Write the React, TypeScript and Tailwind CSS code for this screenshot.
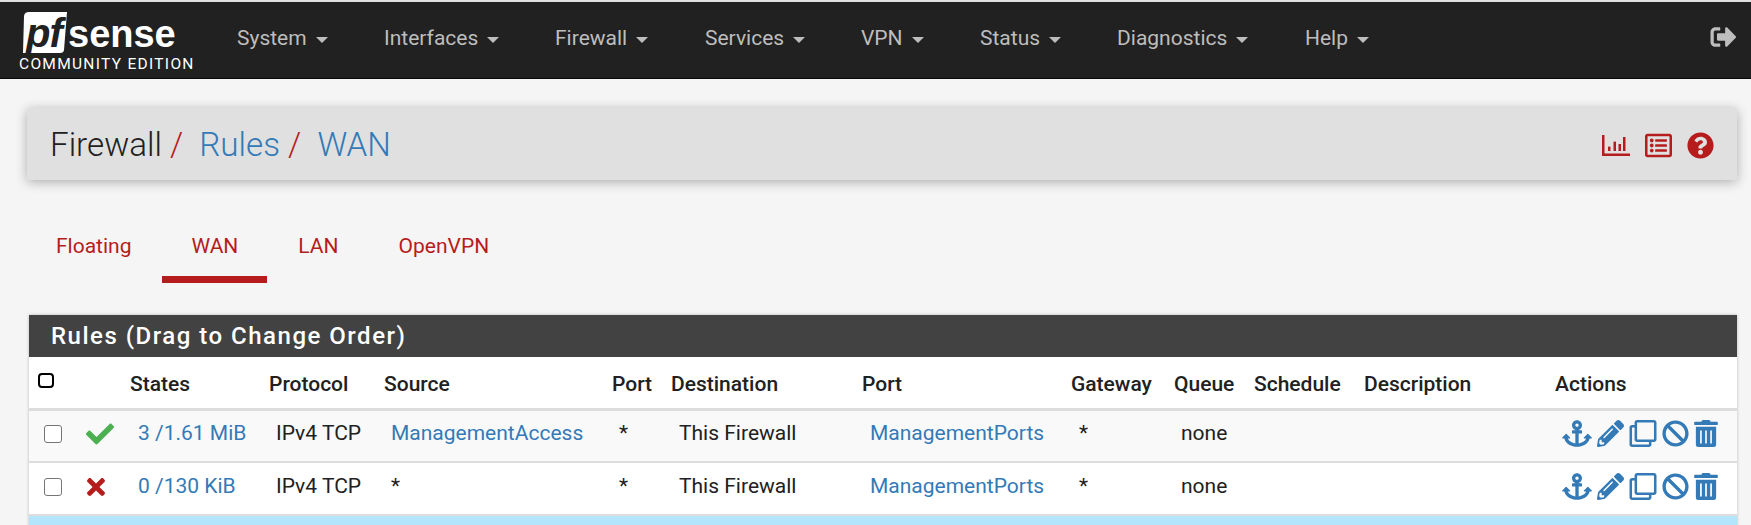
import React from 'react';
import {
  FaAnchor,
  FaBan,
  FaCheck,
  FaPencilAlt,
  FaQuestionCircle,
  FaRegClone,
  FaRegListAlt,
  FaSignOutAlt,
  FaTimes,
  FaTrashAlt,
} from 'react-icons/fa';

const menu = [
  { label: 'System', cls: 'w-[147px]' },
  { label: 'Interfaces', cls: 'w-[171px]' },
  { label: 'Firewall', cls: 'w-[150px]' },
  { label: 'Services', cls: 'w-[156px]' },
  { label: 'VPN', cls: 'w-[119px]' },
  { label: 'Status', cls: 'w-[137px]' },
  { label: 'Diagnostics', cls: 'w-[188px]' },
  { label: 'Help', cls: 'w-[90px]' },
];

const tabs = [
  { label: 'Floating', active: false },
  { label: 'WAN', active: true },
  { label: 'LAN', active: false },
  { label: 'OpenVPN', active: false },
];

const headers = [
  { label: '', cls: 'w-[45px]' },
  { label: '', cls: 'w-[56px]' },
  { label: 'States', cls: 'w-[139px]' },
  { label: 'Protocol', cls: 'w-[115px]' },
  { label: 'Source', cls: 'w-[228px]' },
  { label: 'Port', cls: 'w-[59px]' },
  { label: 'Destination', cls: 'w-[191px]' },
  { label: 'Port', cls: 'w-[209px]' },
  { label: 'Gateway', cls: 'w-[103px]' },
  { label: 'Queue', cls: 'w-[80px]' },
  { label: 'Schedule', cls: 'w-[110px]' },
  { label: 'Description', cls: 'w-[191px]' },
  { label: 'Actions', cls: '' },
];

const rules = [
  { ok: true, states: '3 /1.61 MiB', source: 'ManagementAccess', bg: 'bg-[#f9f9f9]' },
  { ok: false, states: '0 /130 KiB', source: '*', bg: 'bg-white' },
];

const Actions = () => (
  <div className="flex items-center gap-[5px] text-[#337ab7]">
    <FaAnchor className="h-[27px] w-[30px]" />
    <FaPencilAlt className="h-[27px] w-[27px]" />
    <FaRegClone className="h-[27px] w-[28px]" />
    <FaBan className="h-[27px] w-[27px]" />
    <FaTrashAlt className="h-[27px] w-[24px]" />
  </div>
);

export default function App() {
  return (
    <div className="h-[525px] overflow-hidden bg-[#f5f5f5] font-['Roboto',sans-serif] text-[21px] text-[#212121]">
      <div className="h-[2px] bg-[#e0e0e0]" />
      <nav className="flex h-[77px] items-center border-b border-[#080808] bg-[#212121] pl-[18px] pr-[14px] text-[#bdbdbd]">
        <div className="mr-[43px] w-[176px]">
          <svg width="160" height="46" viewBox="18 10 160 46" className="block">
            <path d="M24 16 Q24.500 12 29 12 L67 12 L64 50 Q63.700 53 60 53 L23 53 Z" fill="#fff" />
            <text x="26" y="47" fontFamily="Liberation Sans" fontWeight="700" fontStyle="italic" fontSize="40" letterSpacing="-1" fill="#212121">pf</text>
            <text x="68" y="47" fontFamily="Liberation Sans" fontWeight="700" fontSize="38" fill="#fff">sense</text>
          </svg>
          <div className="ml-[1px] mt-[1px] whitespace-nowrap text-[15.5px] font-normal leading-[14px] tracking-[1.3px] text-white">COMMUNITY EDITION</div>
        </div>
        {menu.map((m) => (
          <div key={m.label} className={`${m.cls} flex items-center pb-[3px]`}>
            {m.label}
            <span className="ml-[9px] mt-[3px] h-0 w-0 border-x-[6px] border-t-[6px] border-x-transparent border-t-[#bdbdbd]" />
          </div>
        ))}
        <FaSignOutAlt className="mb-[6px] ml-auto h-[26px] w-[27px]" />
      </nav>

      <div className="pl-[27px] pr-[14px]">
        <div className="mt-[29px] flex h-[72px] items-center justify-between rounded-[2px] bg-[#e0e0e0] pl-[23px] pr-[23px] pt-[2px] shadow-[0_2px_12px_rgba(0,0,0,0.3)]">
          <h1 className="text-[33.2px] font-light">
            Firewall<span className="text-[#b71c1c]"> / </span>
            <a className="ml-[8px] text-[#337ab7]">Rules</a>
            <span className="text-[#b71c1c]"> / </span>
            <a className="ml-[8px] text-[#337ab7]">WAN</a>
          </h1>
          <div className="flex items-center gap-[14px] text-[27px] text-[#b71c1c]">
            <svg width="28" height="21" viewBox="0 0 28 21" fill="currentColor">
              <path d="M0 0h2.500v18.500H28V21H0z" />
              <rect x="6" y="11.600" width="2.500" height="4.400" />
              <rect x="11.500" y="6.600" width="2.500" height="9.400" />
              <rect x="16.500" y="9" width="2.500" height="7" />
              <rect x="21" y="2" width="2.500" height="14" />
            </svg>
            <FaRegListAlt className="ml-[1px]" />
            <FaQuestionCircle className="ml-[1px]" />
          </div>
        </div>

        <ul className="mt-[26px] flex h-[78px] gap-[2px] text-[21px] text-[#b71c1c]">
          {tabs.map((t) => (
            <li
              key={t.label}
              className={`flex h-[77px] items-center px-[29px] pt-[12px] ${t.active ? 'border-b-[7px] border-[#b71c1c]' : 'pb-[7px]'}`}
            >
              {t.label}
            </li>
          ))}
        </ul>

        <div className="ml-[2px] mt-[31px] bg-white shadow-[0_0_3px_rgba(0,0,0,0.25)]">
          <h2 className="flex h-[42px] items-center bg-[#424242] pl-[22px] text-[24px] font-medium tracking-[1.5px] text-white">
            Rules (Drag to Change Order)
          </h2>
          <table className="w-full table-fixed border-collapse">
            <thead>
              <tr className="h-[52px] border-b-[3px] border-[#dddddd] text-left">
                {headers.map((h, i) => (
                  <th key={i} className={`${h.cls} p-0 pt-[5px] font-medium`}>
                    {i === 0 ? (
                      <span className="relative -top-[4px] ml-[9px] block h-[15px] w-[16px] rounded-[4px] border-[2.5px] border-black" />
                    ) : (
                      h.label
                    )}
                  </th>
                ))}
              </tr>
            </thead>
            <tbody>
              {rules.map((r) => (
                <tr key={r.states} className={`h-[53px] border-b-2 border-[#dddddd] ${r.bg}`}>
                  <td className="p-0 pb-[4px]">
                    <span className="ml-[15px] block h-[18px] w-[18px] rounded-[3px] border border-[#767676] bg-white" />
                  </td>
                  <td className="p-0 pb-[4px]">
                    {r.ok ? (
                      <FaCheck className="ml-[12px] text-[28px] text-[#4caf50]" />
                    ) : (
                      <FaTimes className="ml-[9px] text-[26px] text-[#b71c1c]" />
                    )}
                  </td>
                  <td className="p-0 pb-[4px] pl-[8px] text-[#337ab7]">{r.states}</td>
                  <td className="p-0 pb-[4px] pl-[7px]">IPv4 TCP</td>
                  <td className={`p-0 pb-[4px] pl-[7px] ${r.ok ? 'text-[#337ab7]' : ''}`}>{r.source}</td>
                  <td className="p-0 pb-[4px] pl-[7px]">*</td>
                  <td className="p-0 pb-[4px] pl-[8px]">This Firewall</td>
                  <td className="p-0 pb-[4px] pl-[8px] text-[#337ab7]">ManagementPorts</td>
                  <td className="p-0 pb-[4px] pl-[8px]">*</td>
                  <td className="p-0 pb-[4px] pl-[7px]">none</td>
                  <td className="p-0" />
                  <td className="p-0" />
                  <td className="p-0 pb-[4px] pl-[7px]">
                    <Actions />
                  </td>
                </tr>
              ))}
              <tr className="h-[53px] bg-[#b3e5fc]">
                <td colSpan={12} className="p-0" />
                <td className="p-0 pb-[4px] pl-[7px]">
                  <Actions />
                </td>
              </tr>
            </tbody>
          </table>
        </div>
      </div>
    </div>
  );
}
